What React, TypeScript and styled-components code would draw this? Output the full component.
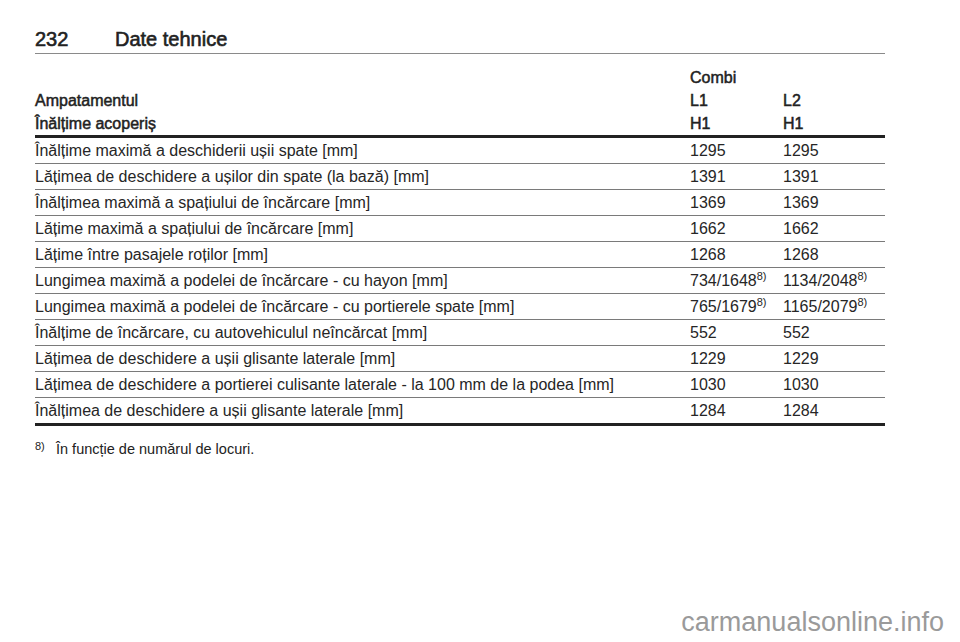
import React from "react";
import styled, { createGlobalStyle } from "styled-components";

const GlobalStyle = createGlobalStyle`
    html, body {
        margin: 0;
        padding: 0;
        background: #ffffff;
    }
    body {
        font-family: "Liberation Sans", Arial, sans-serif;
        color: #1a1a1a;
    }
`;

interface Row {
    label: string;
    l1: string;
    l2: string;
    note?: boolean;
}

const rows: Row[] = [
    { label: "Înălțime maximă a deschiderii ușii spate [mm]", l1: "1295", l2: "1295" },
    { label: "Lățimea de deschidere a ușilor din spate (la bază) [mm]", l1: "1391", l2: "1391" },
    { label: "Înălțimea maximă a spațiului de încărcare [mm]", l1: "1369", l2: "1369" },
    { label: "Lățime maximă a spațiului de încărcare [mm]", l1: "1662", l2: "1662" },
    { label: "Lățime între pasajele roților [mm]", l1: "1268", l2: "1268" },
    { label: "Lungimea maximă a podelei de încărcare - cu hayon [mm]", l1: "734/1648", l2: "1134/2048", note: true },
    { label: "Lungimea maximă a podelei de încărcare - cu portierele spate [mm]", l1: "765/1679", l2: "1165/2079", note: true },
    { label: "Înălțime de încărcare, cu autovehiculul neîncărcat [mm]", l1: "552", l2: "552" },
    { label: "Lățimea de deschidere a ușii glisante laterale [mm]", l1: "1229", l2: "1229" },
    { label: "Lățimea de deschidere a portierei culisante laterale - la 100 mm de la podea [mm]", l1: "1030", l2: "1030" },
    { label: "Înălțimea de deschidere a ușii glisante laterale [mm]", l1: "1284", l2: "1284" },
];

const App: React.FC = () => (
    <Page>
        <GlobalStyle />
        <PageHeader>
            <PageNumber>232</PageNumber>
            <PageTitle>Date tehnice</PageTitle>
        </PageHeader>

        <Table>
            <HeadRow>
                <HeadCell />
                <HeadCell>Combi</HeadCell>
                <HeadCell />
            </HeadRow>
            <HeadRow>
                <HeadCell>Ampatamentul</HeadCell>
                <HeadCell>L1</HeadCell>
                <HeadCell>L2</HeadCell>
            </HeadRow>
            <HeadRow last>
                <HeadCell>Înălțime acoperiș</HeadCell>
                <HeadCell>H1</HeadCell>
                <HeadCell>H1</HeadCell>
            </HeadRow>
            {rows.map((row, i) => (
                <DataRow key={`row-${i}`} last={i === rows.length - 1}>
                    <Cell>{row.label}</Cell>
                    <Cell>
                        {row.l1}
                        {row.note && <Sup>8)</Sup>}
                    </Cell>
                    <Cell>
                        {row.l2}
                        {row.note && <Sup>8)</Sup>}
                    </Cell>
                </DataRow>
            ))}
        </Table>

        <Footnote>
            <FootMark>8)</FootMark>
            <span>În funcție de numărul de locuri.</span>
        </Footnote>

        <Watermark>carmanualsonline.info</Watermark>
    </Page>
);

const Page = styled.div`
    width: 960px;
    height: 642px;
    box-sizing: border-box;
    padding: 28px 0 0 35px;
    display: flex;
    flex-direction: column;
    overflow: hidden;
`;

const PageHeader = styled.header`
    width: 850px;
    display: flex;
    align-items: baseline;
    border-bottom: 1px solid #8a8a8a;
    padding-bottom: 2px;
    font-size: 20px;
    color: #222;
    -webkit-text-stroke: 0.6px #222;
`;

const PageNumber = styled.span`
    width: 80px;
`;

const PageTitle = styled.span``;

const Table = styled.div`
    width: 850px;
    margin-top: 12px;
    display: flex;
    flex-direction: column;
`;

const grid = `
    display: grid;
    grid-template-columns: 655px 93px 1fr;
    align-items: center;
`;

const HeadRow = styled.div<{ last?: boolean }>`
    ${grid}
    height: 23px;
    font-size: 16px;
    color: #222;
    -webkit-text-stroke: 0.5px #222;
    border-bottom: ${(p) => (p.last ? "3px solid #222" : "none")};
`;

const HeadCell = styled.div`
    white-space: nowrap;
`;

const DataRow = styled.div<{ last?: boolean }>`
    ${grid}
    height: 25px;
    font-size: 16px;
    color: #262626;
    border-bottom: ${(p) => (p.last ? "3px solid #222" : "1px solid #7a7a7a")};
`;

const Cell = styled.div`
    white-space: nowrap;
`;

const Sup = styled.sup`
    font-size: 11px;
    vertical-align: 6px;
    line-height: 0;
`;

const Footnote = styled.div`
    margin-top: 15px;
    display: flex;
    align-items: baseline;
    font-size: 14.5px;
    color: #222;
`;

const FootMark = styled.span`
    width: 21px;
    font-size: 11px;
    position: relative;
    top: -4px;
`;

const Watermark = styled.div`
    margin-top: auto;
    align-self: flex-end;
    margin-right: 16px;
    margin-bottom: 4px;
    font-size: 27px;
    color: #9a9a9a;
`;

export default App;
